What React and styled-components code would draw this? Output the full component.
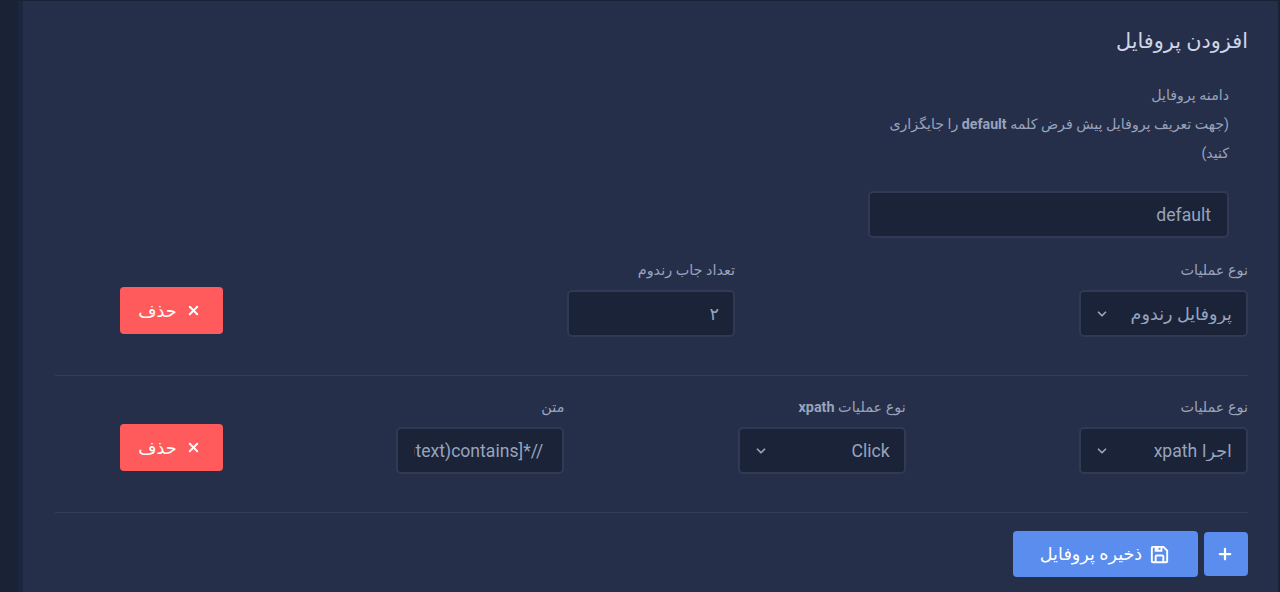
import React from "react";
import styled, { createGlobalStyle } from "styled-components";
import { ChevronDown, Plus, X } from "lucide-react";
import { BiSave } from "react-icons/bi";

const Global = createGlobalStyle`
  html, body { margin: 0; padding: 0; background: #1a2236; height: 100%; overflow: hidden; }
  * { box-sizing: border-box; }
  body { font-family: Roboto, "DejaVu Sans", sans-serif; }
`;

const Page = styled.div`
  display: flex;
  direction: rtl;
  width: 1280px;
  height: 592px;
  overflow: hidden;
  padding: 1px 2px 0 0;
  background: #1a2236;
`;

const Card = styled.main`
  width: 1255px;
  flex: none;
  background: #262f49;
  box-shadow: -5px 0 0 #1b2641;
  padding: 26px 30px 0 32px;
`;

const Title = styled.h2`
  margin: 0 0 26px;
  font-size: 20.8px;
  line-height: 28px;
  font-weight: 400;
  color: #cdd5e8;
`;

const DomainBlock = styled.div`
  width: 361px;
  margin-right: 19px;
`;

const Hint = styled.label`
  display: block;
  font-size: 14.2px;
  line-height: 29px;
  color: #98a3bd;
  margin-bottom: 23px;
`;

const TextField = styled.input`
  width: ${(p) => p.$w || 168}px;
  height: 47px;
  padding: 0 ${(p) => p.$end || 16}px 0 16px;
  background: #1a2338;
  border: 2px solid #303a54;
  border-radius: 5px;
  direction: rtl;
  font: 400 17.6px Roboto, "DejaVu Sans", sans-serif;
  color: #98a3bd;
  outline: none;
`;

const Row = styled.div`
  display: flex;
  align-items: flex-start;
  gap: ${(p) => p.$gap}px;
  margin-top: ${(p) => p.$top}px;
`;

const Field = styled.div`
  display: flex;
  flex-direction: column;
  flex: none;
  width: ${(p) => p.$w || 168}px;
`;

const FieldLabel = styled.label`
  font-size: 14.4px;
  line-height: 18px;
  height: 28px;
  color: #98a3bd;
`;

const SelectWrap = styled.div`
  position: relative;
  width: 100%;
  height: 47px;
  color: #98a3bd;
  svg {
    position: absolute;
    left: 16px;
    top: 17px;
    pointer-events: none;
  }
`;

const Select = styled.select`
  appearance: none;
  width: 100%;
  height: 100%;
  padding: 0 14px;
  background: #1a2338;
  border: 2px solid #303a54;
  border-radius: 5px;
  direction: rtl;
  font: 400 17.6px Roboto, "DejaVu Sans", sans-serif;
  color: #98a3bd;
  outline: none;
`;

const DangerButton = styled.button`
  display: flex;
  flex: none;
  align-items: center;
  justify-content: center;
  gap: 9px;
  width: 103px;
  height: 47px;
  margin-top: 25px;
  padding: 0 4px 0 0;
  background: #ff5b5c;
  border: 0;
  border-radius: 4px;
  color: #fff;
  font: 400 17.6px Roboto, "DejaVu Sans", sans-serif;
  direction: rtl;
`;

const Divider = styled.hr`
  margin: 38px 0 0;
  border: 0;
  height: 1px;
  background: #353f59;
`;

const Actions = styled.div`
  display: flex;
  align-items: center;
  gap: 6px;
  margin-top: 18px;
`;

const AddButton = styled.button`
  display: flex;
  align-items: center;
  justify-content: center;
  width: 44px;
  height: 44px;
  padding: 0 2px 0 0;
  background: #5a8dee;
  border: 0;
  border-radius: 4px;
  color: #fff;
`;

const SaveButton = styled.button`
  display: flex;
  align-items: center;
  justify-content: center;
  gap: 6px;
  width: 185px;
  height: 46px;
  padding: 0;
  background: #5a8dee;
  border: 0;
  border-radius: 4px;
  color: #fff;
  font: 400 17.6px Roboto, "DejaVu Sans", sans-serif;
  direction: rtl;
`;

const SelectBox = ({ value }) => (
  <SelectWrap>
    <Select defaultValue={value}>
      <option>{value}</option>
    </Select>
    <ChevronDown size={14} strokeWidth={3} />
  </SelectWrap>
);

const RemoveButton = () => (
  <DangerButton>
    <X size={15} strokeWidth={3} />
    حذف
  </DangerButton>
);

export default function App() {
  return (
    <>
      <Global />
      <Page>
        <Card>
          <Title>افزودن پروفایل</Title>
          <DomainBlock>
            <Hint>
              دامنه پروفایل
              <br />
              (جهت تعریف پروفایل پیش فرض کلمه <b>default</b> را جایگزاری کنید)
            </Hint>
            <TextField $w={361} defaultValue="default" />
          </DomainBlock>
          <Row $gap={344} $top={24}>
            <Field $w={169}>
              <FieldLabel>نوع عملیات</FieldLabel>
              <SelectBox value="پروفایل رندوم" />
            </Field>
            <Field>
              <FieldLabel>تعداد جاب رندوم</FieldLabel>
              <TextField $end={14} defaultValue="۲" />
            </Field>
            <RemoveButton />
          </Row>
          <Divider />
          <Row $gap={173.33} $top={23}>
            <Field $w={169}>
              <FieldLabel>نوع عملیات</FieldLabel>
              <SelectBox value="اجرا xpath" />
            </Field>
            <Field>
              <FieldLabel>
                نوع عملیات <b>xpath</b>
              </FieldLabel>
              <SelectBox value="Click" />
            </Field>
            <Field>
              <FieldLabel>متن</FieldLabel>
              <TextField $end={19} defaultValue="//*[contains(text(),'متن مورد نظر')]" />
            </Field>
            <RemoveButton />
          </Row>
          <Divider />
          <Actions>
            <AddButton aria-label="افزودن">
              <Plus size={18} strokeWidth={3} />
            </AddButton>
            <SaveButton>
              <BiSave size={23} />
              ذخیره پروفایل
            </SaveButton>
          </Actions>
        </Card>
      </Page>
    </>
  );
}
